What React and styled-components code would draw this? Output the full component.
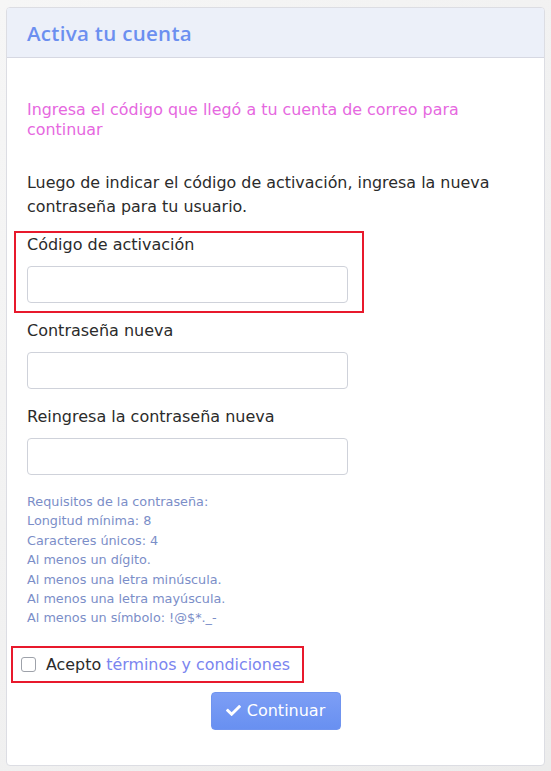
import React from 'react';
import styled, { createGlobalStyle } from 'styled-components';
import { FaCheck } from 'react-icons/fa';

const GlobalStyle = createGlobalStyle`
  html, body {
    margin: 0;
    padding: 0;
  }
  body {
    background: linear-gradient(135deg, #f6f6f6 0%, #ececec 100%);
    font-family: "DejaVu Sans", "Noto Sans", sans-serif;
    min-height: 771px;
  }
  * { box-sizing: border-box; }
`;

const Page = styled.div`
  padding: 7px 6px 4px 6px;
`;

const Card = styled.div`
  width: 539px;
  background: #fff;
  border: 1px solid #dcdde3;
  border-radius: 4px;
  overflow: hidden;
`;

const CardHeader = styled.div`
  height: 50px;
  background: #ecf0f9;
  border-bottom: 1px solid #d6d8e2;
  display: flex;
  align-items: center;
  padding: 0 20px;

  h2 {
    margin: 0;
    font-family: "Open Sans", sans-serif;
    font-size: 20.5px;
    font-weight: 600;
    letter-spacing: 0.3px;
    color: #6b8ff0;
  }
`;

const CardBody = styled.div`
  padding: 42px 20px 35px;
  display: flex;
  flex-direction: column;
`;

const Notice = styled.p`
  margin: 0 0 31px;
  font-size: 15.9px;
  line-height: 20px;
  color: #e668e0;
`;

const Intro = styled.p`
  margin: 0 0 12px;
  font-size: 15.9px;
  line-height: 24px;
  color: #2b2b2b;
`;

const FormGroup = styled.div`
  width: 350px;
  margin-left: -13px;
  padding: 1px 11px 8px;
  border: 2px solid ${props => (props.highlight ? '#e8192c' : 'transparent')};
  display: flex;
  flex-direction: column;
  gap: 10px;

  & + & {
    margin-top: 4px;
  }
`;

const Label = styled.label`
  font-size: 16px;
  line-height: 22px;
  color: #2b2b2b;
`;

const Input = styled.input`
  width: 321px;
  height: 37px;
  border: 1px solid #cfd2da;
  border-radius: 4px;
  background: #fff;
  outline: none;
`;

const Requirements = styled.div`
  margin-top: 7px;
  font-size: 12.8px;
  line-height: 19.4px;
  color: #7b8ec8;
`;

const TermsRow = styled.div`
  margin-top: 18px;
  margin-left: -16px;
  width: 293px;
  height: 37px;
  border: 2px solid #e8192c;
  display: flex;
  align-items: center;
  padding-left: 8px;
  gap: 10px;
  font-size: 15.9px;
  color: #2b2b2b;

  a {
    color: #7b85ef;
    text-decoration: none;
  }
`;

const Checkbox = styled.span`
  width: 15px;
  height: 15px;
  border: 1px solid #9ea2aa;
  border-radius: 3px;
  background: #fff;
  flex-shrink: 0;
`;

const Actions = styled.div`
  display: flex;
  justify-content: center;
  margin-top: 9px;
`;

const SubmitButton = styled.button`
  width: 130px;
  height: 38px;
  border: 1px solid #7094ef;
  border-radius: 4px;
  background: linear-gradient(180deg, #7d9ef5 0%, #6890f1 100%);
  color: #fff;
  font-family: inherit;
  font-size: 16px;
  display: flex;
  align-items: center;
  justify-content: center;
  gap: 6px;
  padding: 0;
  cursor: pointer;
`;

const requirements = [
  'Requisitos de la contraseña:',
  'Longitud mínima: 8',
  'Caracteres únicos: 4',
  'Al menos un dígito.',
  'Al menos una letra minúscula.',
  'Al menos una letra mayúscula.',
  'Al menos un símbolo: !@$*._-',
];

const fields = [
  { id: 'code', label: 'Código de activación', highlight: true },
  { id: 'pass', label: 'Contraseña nueva' },
  { id: 'pass2', label: 'Reingresa la contraseña nueva' },
];

const App = () => (
  <Page>
    <GlobalStyle />
    <Card>
      <CardHeader>
        <h2>Activa tu cuenta</h2>
      </CardHeader>
      <CardBody>
        <Notice>Ingresa el código que llegó a tu cuenta de correo para continuar</Notice>
        <Intro>
          Luego de indicar el código de activación, ingresa la nueva contraseña para tu usuario.
        </Intro>
        {fields.map(field => (
          <FormGroup key={field.id} highlight={field.highlight}>
            <Label htmlFor={field.id}>{field.label}</Label>
            <Input id={field.id} type={field.id === 'code' ? 'text' : 'password'} />
          </FormGroup>
        ))}
        <Requirements>
          {requirements.map(line => (
            <div key={line}>{line}</div>
          ))}
        </Requirements>
        <TermsRow>
          <Checkbox />
          <span>
            Acepto <a href="#terminos">términos y condiciones</a>
          </span>
        </TermsRow>
        <Actions>
          <SubmitButton>
            <FaCheck size={15} />
            Continuar
          </SubmitButton>
        </Actions>
      </CardBody>
    </Card>
  </Page>
);

export default App;
